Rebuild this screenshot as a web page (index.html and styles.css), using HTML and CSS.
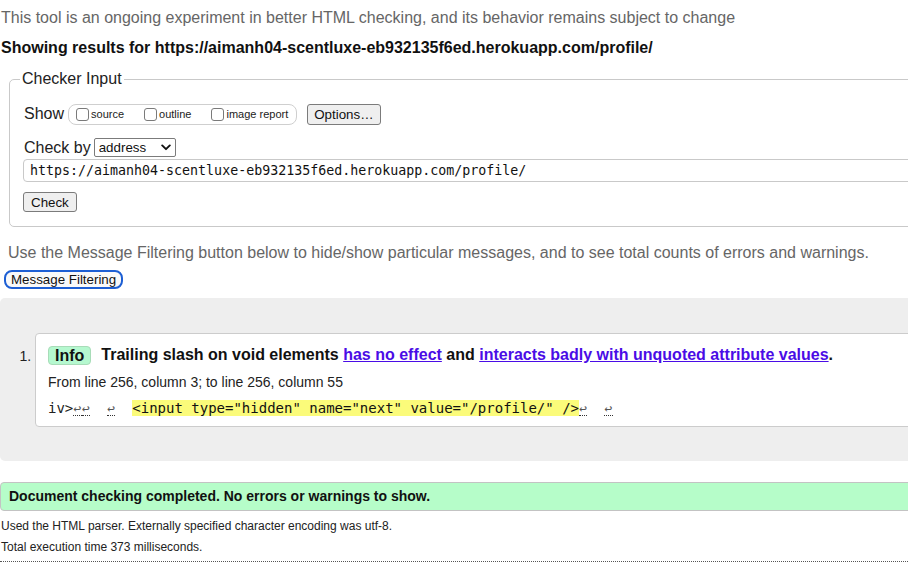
FILE: index.html
```html
<!DOCTYPE html>
<html lang="en">
<head>
<meta charset="utf-8">
<title>Nu Html Checker</title>
<link rel="stylesheet" href="styles.css">
</head>
<body>
<p class="experiment">This tool is an ongoing experiment in better HTML checking, and its behavior remains subject to change</p>
<h2 class="showing">Showing results for https://aimanh04-scentluxe-eb932135f6ed.herokuapp.com/profile/</h2>

<fieldset class="checker">
  <legend class="legend">Checker Input</legend>
  <div class="row show-row">
    <span class="label">Show</span>
    <span class="checks">
      <label class="check"><input type="checkbox" class="box"><span>source</span></label>
      <label class="check"><input type="checkbox" class="box"><span>outline</span></label>
      <label class="check"><input type="checkbox" class="box"><span>image report</span></label>
    </span>
    <button type="button" class="btn options">Options…</button>
  </div>
  <div class="row by-row">
    <span class="label">Check by</span>
    <span class="select-wrap">
      <select class="select"><option>address</option></select>
      <svg class="chev" width="10" height="7" viewBox="0 0 10 7"><path d="M1.2 1.4 L5 5.2 L8.8 1.4" fill="none" stroke="#111" stroke-width="1.9" stroke-linecap="round" stroke-linejoin="round"/></svg>
    </span>
  </div>
  <input class="url" type="text" value="https://aimanh04-scentluxe-eb932135f6ed.herokuapp.com/profile/">
  <div class="row submit-row">
    <button type="button" class="btn check-btn">Check</button>
  </div>
</fieldset>

<p class="filter-note">Use the Message Filtering button below to hide/show particular messages, and to see total counts of errors and warnings.</p>
<button type="button" class="filter-btn">Message Filtering</button>

<section class="results">
  <ol class="messages">
    <li class="message">
      <p class="title"><span class="badge">Info</span><span class="title-text">Trailing slash on void elements <a href="#">has no effect</a> and <a href="#">interacts badly with unquoted attribute values</a>.</span></p>
      <p class="location">From line 256, column 3; to line 256, column 55</p>
      <p class="extract"><code>iv&gt;<b class="lf">↩</b><b class="lf">↩</b>  <b class="lf">↩</b>  <mark class="hl">&lt;input type="hidden" name="next" value="/profile/" /&gt;</mark><b class="lf">↩</b>  <b class="lf">↩</b></code></p>
    </li>
  </ol>
</section>

<p class="success">Document checking completed. No errors or warnings to show.</p>
<p class="meta">Used the HTML parser. Externally specified character encoding was utf-8.</p>
<p class="meta meta-time">Total execution time 373 milliseconds.</p>
<hr class="dotted">
</body>
</html>
```

FILE: styles.css
```css
html, body {
  overflow: hidden;
}
body {
  margin: 0;
  padding: 8px 0 0 1px;
  font-family: "Liberation Sans", Arial, sans-serif;
  color: #111;
  background: #fff;
}
p { margin: 0; }

.experiment {
  font-size: 16px;
  line-height: 20px;
  color: #666;
  white-space: nowrap;
}
.showing {
  margin: 10px 0 0;
  font-size: 16px;
  line-height: 20px;
  font-weight: bold;
  white-space: nowrap;
}

.checker {
  margin: 12px -80px 0 8px;
  padding: 0 14px 14px;
  border: 1px solid #c9c9c9;
  border-radius: 5px;
  min-width: 0;
}
.legend {
  margin-left: -4px;
  padding: 0 2px;
  font-size: 16px;
  line-height: 18px;
  color: #222;
}
.row {
  display: flex;
  align-items: center;
}
.label {
  font-size: 16px;
  line-height: 18px;
  color: #222;
}
.show-row {
  margin-top: 15px;
  height: 22px;
}
.checks {
  display: inline-flex;
  align-items: center;
  gap: 20px;
  height: 19px;
  margin-left: 4px;
  padding: 0 8px 0 7px;
  border: 1px solid #cfcfcf;
  border-radius: 8px;
}
.check {
  display: inline-flex;
  align-items: center;
  font-size: 11px;
  color: #222;
}
.box {
  -webkit-appearance: none;
  appearance: none;
  width: 13px;
  height: 13px;
  margin: 0 2px 0 0;
  border: 1px solid #7a7a7a;
  border-radius: 3px;
  background: #fff;
}
.btn {
  font-family: "Liberation Sans", Arial, sans-serif;
  font-size: 13.333px;
  line-height: 15px;
  color: #111;
  background: #efefef;
  border: 1px solid #7b7b7b;
  border-radius: 3px;
  padding: 2px 7px;
}
.options {
  margin-left: 10px;
  height: 21px;
  padding: 0 6px;
}
.by-row {
  margin-top: 13px;
  height: 19px;
}
.select-wrap {
  position: relative;
  display: inline-block;
  margin-left: 3px;
}
.select {
  -webkit-appearance: none;
  appearance: none;
  display: block;
  width: 82px;
  height: 19px;
  padding: 0 0 0 4px;
  font-family: "Liberation Sans", Arial, sans-serif;
  font-size: 13.333px;
  color: #111;
  background: #fff;
  border: 1px solid #7b7b7b;
  border-radius: 2px;
}
.chev {
  position: absolute;
  right: 5px;
  top: 6px;
}
.url {
  display: block;
  box-sizing: border-box;
  width: 100%;
  height: 23px;
  margin: 2px 0 0 -1px;
  padding: 0 6px;
  font-family: "DejaVu Sans Mono", monospace;
  font-size: 13.3px;
  color: #111;
  border: 1px solid #c9c9c9;
  border-radius: 4px;
  background: #fff;
}
.submit-row {
  margin-top: 10px;
}
.check-btn {
  margin-left: -1px;
  height: 20px;
  padding: 0 7px;
}

.filter-note {
  margin: 16px 0 0 7px;
  font-size: 16px;
  line-height: 20px;
  color: #666;
  white-space: nowrap;
}
.filter-btn {
  display: block;
  margin: 7px 0 0 3px;
  height: 19px;
  padding: 0 5px;
  font-family: "Liberation Sans", Arial, sans-serif;
  font-size: 13.333px;
  line-height: 15px;
  color: #111;
  background: #f9f9f9;
  border: 2px solid #1d5fd4;
  border-radius: 8px;
}

.results {
  margin: 9px -60px 0 -1px;
  padding: 35px 0 34px;
  background: #eeeeee;
  border-radius: 5px;
}
.messages {
  margin: 0;
  padding: 0 0 0 35px;
  font-size: 14px;
  color: #222;
}
.message {
  background: #fff;
  border: 1px solid #cccccc;
  border-radius: 4px;
  padding: 11px 12px 9px;
  height: 72px;
}
.message::marker {
  font-family: "Liberation Sans", Arial, sans-serif;
}
.title {
  display: flex;
  align-items: center;
  height: 20px;
  font-size: 16px;
  font-weight: bold;
  color: #111;
  white-space: nowrap;
}
.badge {
  display: inline-block;
  box-sizing: border-box;
  height: 19px;
  line-height: 17px;
  padding: 0 6px;
  margin-right: 10px;
  background: #b5f8cf;
  border: 1px solid #a8dcb8;
  border-radius: 4px;
  color: #111;
}
.title a {
  color: #4a0ce6;
  text-decoration: underline;
}
.location {
  margin-top: 8px;
  font-size: 14px;
  line-height: 18px;
  color: #222;
  white-space: nowrap;
}
.extract {
  margin-top: 8px;
  line-height: 18px;
  white-space: pre;
}
.extract code {
  font-family: "DejaVu Sans Mono", monospace;
  font-size: 14px;
  color: #222;
}
.lf {
  display: inline-block;
  width: 8.43px;
  font-size: 13px;
  line-height: 12px;
  font-weight: normal;
  color: #555;
  text-align: center;
  border-bottom: 1px dotted #333;
}
.hl {
  background: #fbfb7a;
  color: #111;
}

.success {
  box-sizing: border-box;
  margin: 21px -60px 0 -1px;
  height: 29px;
  padding: 0 8px;
  line-height: 27px;
  font-size: 14px;
  font-weight: bold;
  color: #111;
  background: #b6fdc9;
  border: 1px solid #c3c3c3;
  border-radius: 4px;
  white-space: nowrap;
}
.meta {
  margin-top: 7px;
  font-size: 12px;
  line-height: 16px;
  color: #222;
}
.meta-time {
  margin-top: 5px;
}
.dotted {
  margin: 6px 0 0 -1px;
  border: 0;
  border-top: 1px dotted #555;
  height: 0;
}
```
